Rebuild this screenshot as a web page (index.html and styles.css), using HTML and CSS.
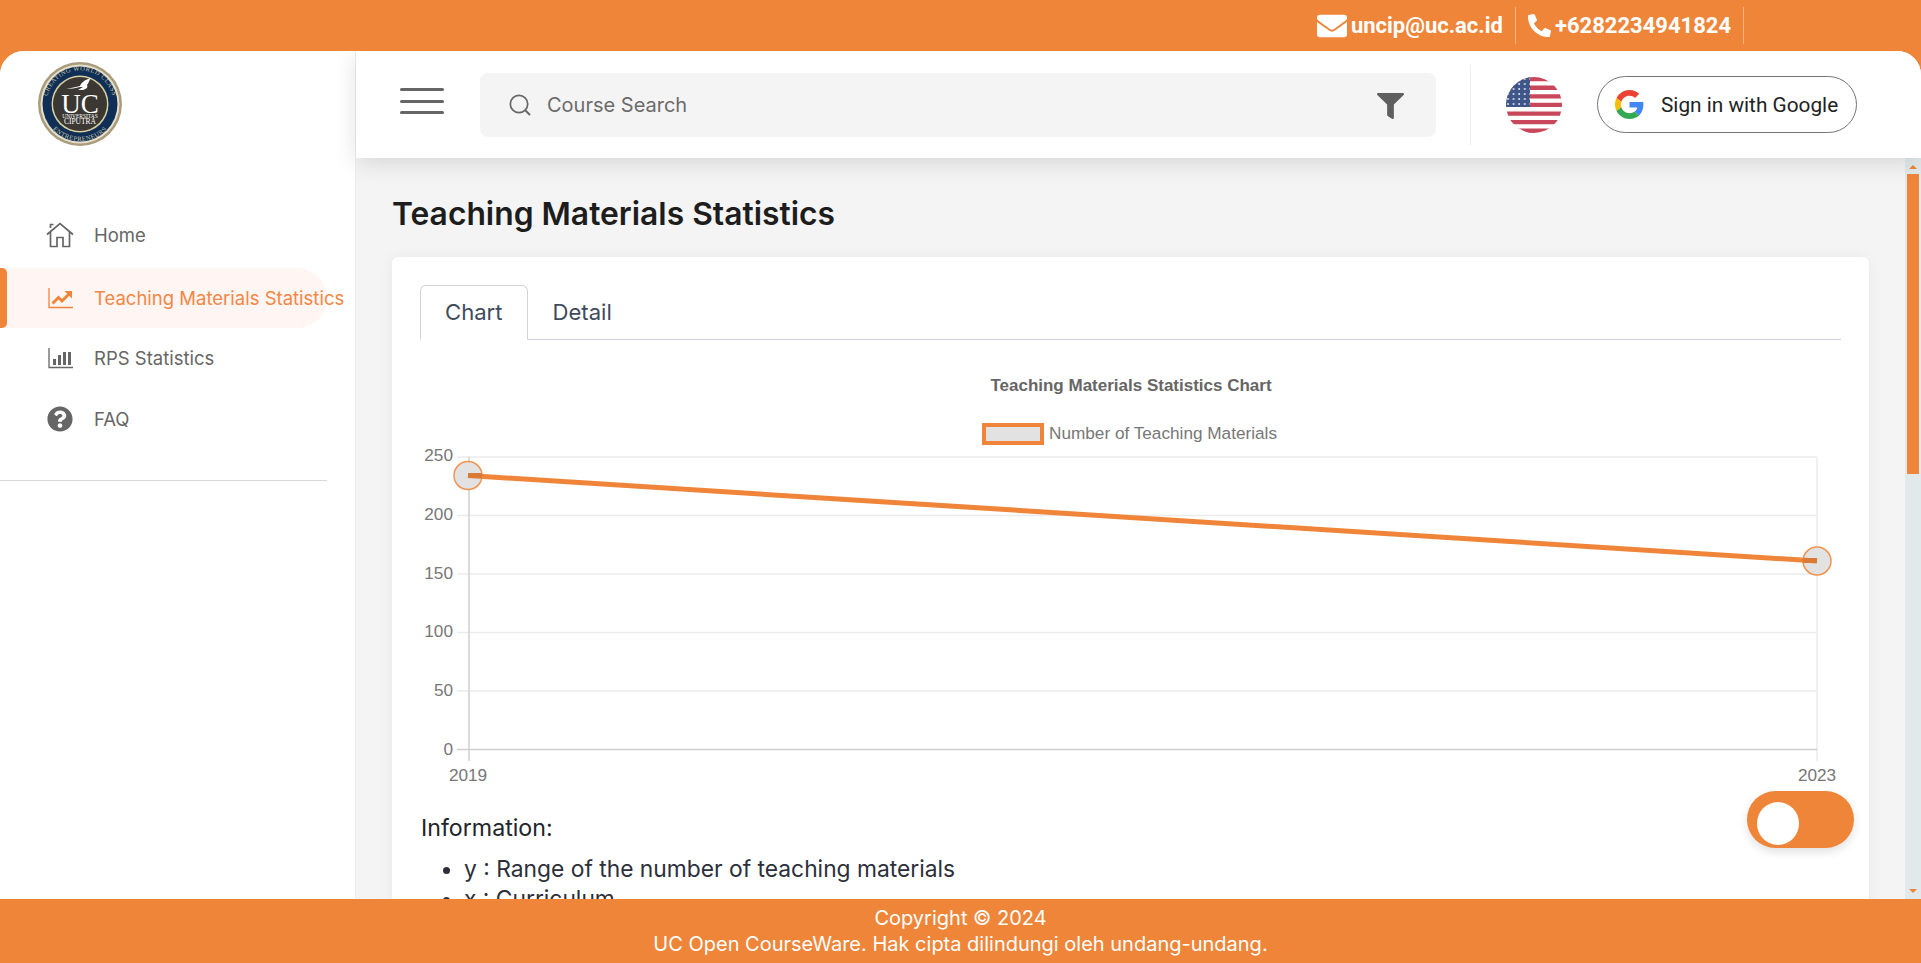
FILE: index.html
```html
<!DOCTYPE html>
<html lang="en">

<head>
    <meta charset="UTF-8">
    <meta name="viewport" content="width=device-width, initial-scale=1.0">
    <title>Teaching Materials Statistics</title>
    <link rel="stylesheet" href="styles.css">
</head>

<body>
    <div class="topbar">
        <div class="topbar-item">
            <svg class="icon-mail" viewBox="0 0 512 512"><path fill="#fff" d="M502.3 190.8c3.9-3.1 9.7-.2 9.7 4.7V400c0 26.5-21.5 48-48 48H48c-26.5 0-48-21.5-48-48V195.6c0-5 5.7-7.8 9.7-4.7 22.4 17.4 52.1 39.5 154.1 113.6 21.1 15.4 56.7 47.8 92.2 47.6 35.7.3 72-32.8 92.3-47.6 102-74.1 131.6-96.3 154-113.7zM256 320c23.2.4 56.6-29.2 73.4-41.4 132.7-96.3 142.8-104.7 173.4-128.7 5.8-4.5 9.2-11.5 9.2-18.9v-19c0-26.5-21.5-48-48-48H48C21.5 64 0 85.5 0 112v19c0 7.4 3.4 14.3 9.2 18.9 30.6 23.9 40.7 32.4 173.4 128.7 16.8 12.2 50.2 41.8 73.4 41.4z"/></svg>
            <span>uncip@uc.ac.id</span>
        </div>
        <div class="topbar-item">
            <svg class="icon-phone" viewBox="0 0 512 512"><path fill="#fff" d="M497.39 361.8l-112-48a24 24 0 0 0-28 6.9l-49.6 60.6A370.66 370.66 0 0 1 130.6 204.11l60.6-49.6a23.94 23.94 0 0 0 6.9-28l-48-112A24.16 24.16 0 0 0 122.6.61l-104 24A24 24 0 0 0 0 48c0 256.5 207.9 464 464 464a24 24 0 0 0 23.4-18.6l24-104a24.29 24.29 0 0 0-14.01-27.6z"/></svg>
            <span>+6282234941824</span>
        </div>
    </div>

    <div class="shell">
        <aside class="sidebar">
            <div class="logo">
                <svg width="84" height="84" viewBox="0 0 84 84">
                    <defs>
                        <path id="arc-top" d="M8.5 42a33.5 33.5 0 0 1 67 0"/>
                        <path id="arc-bottom" d="M5 42a37 37 0 0 0 74 0"/>
                    </defs>
                    <circle cx="42" cy="42" r="42" fill="#a99c7c"/>
                    <circle cx="42" cy="42" r="39.500" fill="#e6dfca"/>
                    <circle cx="42" cy="42" r="37.500" fill="#0f2f56"/>
                    <circle cx="42" cy="42" r="28.500" fill="#d9cf9f"/>
                    <circle cx="42" cy="42" r="27" fill="#3b3732"/>
                    <text class="logo-ring"><textPath href="#arc-top" startOffset="50%" text-anchor="middle">CREATING WORLD CLASS</textPath></text>
                    <text class="logo-ring"><textPath href="#arc-bottom" startOffset="50%" text-anchor="middle">ENTREPRENEURS</textPath></text>
                    <path fill="#fff" d="M28 27c5-1 10-2 14-3 1-3 4-6 11-8-2 2-2 5-4 7 1 2 0 4-4 5l-5 0 5-3-3 0c-4 1-10 2-14 2z"/>
                    <text class="logo-uc" x="42" y="50.500" text-anchor="middle">UC</text>
                    <text class="logo-small" x="42" y="55.500" text-anchor="middle">UNIVERSITAS</text>
                    <text class="logo-name" x="42" y="62" text-anchor="middle">CIPUTRA</text>
                </svg>
            </div>
            <nav class="nav">
                <a class="nav-item">
                    <svg class="nav-icon" viewBox="0 0 28 26"><path fill="none" stroke="#666" stroke-width="1.700" d="M1 12.500 14 1.500l13 11M4.500 10v14.500h6.500v-9h6v9h6.500V10M4.500 6V2.500h3"/></svg>
                    <span>Home</span>
                </a>
                <a class="nav-item active">
                    <svg class="nav-icon" viewBox="0 0 28 26"><path fill="none" stroke="#f0853a" stroke-width="1.300" d="M3 3v19.500h24"/><path fill="none" stroke="#f0853a" stroke-width="3" d="M6.500 18.500l6-6 3.500 3.500 7-7"/><path fill="#f0853a" d="M18.500 6H26v7.500z"/></svg>
                    <span>Teaching Materials Statistics</span>
                </a>
                <a class="nav-item">
                    <svg class="nav-icon" viewBox="0 0 28 26"><path fill="none" stroke="#666" stroke-width="1.300" d="M3 3v19.500h24"/><path fill="#666" d="M7 14h3v6H7zM12 10h3v10h-3zM17 7h3v13h-3zM22 7h3v13h-3z"/></svg>
                    <span>RPS Statistics</span>
                </a>
                <a class="nav-item">
                    <svg class="nav-icon" viewBox="0 0 512 512"><path fill="#666" d="M504 256c0 136.997-111.043 248-248 248S8 392.997 8 256C8 119.083 119.043 8 256 8s248 111.083 248 248zM262.655 90c-54.497 0-89.255 22.957-116.549 63.758-3.536 5.286-2.353 12.415 2.715 16.258l34.699 26.31c5.205 3.947 12.621 3.008 16.665-2.122 17.864-22.658 30.113-35.797 57.303-35.797 20.429 0 45.698 13.148 45.698 32.958 0 14.976-12.363 22.667-32.534 33.976C247.128 238.528 216 254.941 216 296v4c0 6.627 5.373 12 12 12h56c6.627 0 12-5.373 12-12v-1.333c0-28.462 83.186-29.647 83.186-106.667 0-58.002-60.165-102-116.531-102zM256 338c-25.365 0-46 20.635-46 46 0 25.364 20.635 46 46 46s46-20.636 46-46c0-25.365-20.635-46-46-46z"/></svg>
                    <span>FAQ</span>
                </a>
            </nav>
            <div class="sidebar-divider"></div>
        </aside>

        <div class="main">
            <header class="header">
                <button class="hamburger"><span></span><span></span><span></span></button>
                <div class="search">
                    <svg class="icon-search" viewBox="0 0 22 22"><circle cx="10" cy="10" r="8.700" fill="none" stroke="#666" stroke-width="1.700"/><path stroke="#666" stroke-width="1.900" d="M16.500 16.500 21 21"/></svg>
                    <span class="search-text">Course Search</span>
                    <svg class="icon-filter" viewBox="0 0 512 512" preserveAspectRatio="none"><path fill="#5f5f5f" d="M487.976 0H24.028C2.71 0-8.047 25.866 7.058 40.971L192 225.941V432c0 7.831 3.821 15.17 10.237 19.662l80 55.98C298.02 518.69 320 507.493 320 487.98V225.941l184.947-184.97C520.021 25.896 509.338 0 487.976 0z"/></svg>
                </div>
                <div class="header-sep"></div>
                <svg class="flag" viewBox="0 0 56 56">
                    <defs>
                        <clipPath id="flag-clip"><circle cx="28" cy="28" r="28"/></clipPath>
                        <pattern id="stars" width="5.600" height="5" patternUnits="userSpaceOnUse"><circle cx="2" cy="2" r="1" fill="#dfe3ee"/></pattern>
                    </defs>
                    <g clip-path="url(#flag-clip)">
                        <rect width="56" height="56" fill="#fff"/>
                        <path fill="#c9475a" d="M0 0h56v4.300H0zM0 8.600h56v4.300H0zM0 17.200h56v4.300H0zM0 25.800h56v4.300H0zM0 34.400h56v4.300H0zM0 43h56v4.300H0zM0 51.600h56V56H0z"/>
                        <rect width="24" height="30" fill="#3f5689"/>
                        <rect width="24" height="30" fill="url(#stars)"/>
                    </g>
                </svg>
                <button class="google-btn">
                    <svg class="icon-google" viewBox="0 0 48 48">
                        <path fill="#EA4335" d="M24 9.500c3.540 0 6.710 1.220 9.210 3.600l6.850-6.850C35.900 2.380 30.470 0 24 0 14.620 0 6.510 5.380 2.560 13.220l7.980 6.190C12.430 13.720 17.740 9.500 24 9.500z"/>
                        <path fill="#4285F4" d="M46.980 24.550c0-1.570-.15-3.090-.38-4.550H24v9.020h12.940c-.58 2.960-2.260 5.480-4.780 7.180l7.730 6c4.510-4.180 7.090-10.360 7.090-17.650z"/>
                        <path fill="#FBBC05" d="M10.530 28.590c-.48-1.450-.76-2.990-.76-4.590s.27-3.140.76-4.590l-7.980-6.190C.92 16.460 0 20.120 0 24c0 3.880.92 7.540 2.560 10.780l7.970-6.190z"/>
                        <path fill="#34A853" d="M24 48c6.480 0 11.930-2.130 15.890-5.810l-7.730-6c-2.150 1.450-4.920 2.300-8.160 2.300-6.260 0-11.570-4.220-13.470-9.910l-7.980 6.190C6.510 42.620 14.620 48 24 48z"/>
                    </svg>
                    <span>Sign in with Google</span>
                </button>
            </header>

            <div class="body-row">
                <section class="content">
                    <h1>Teaching Materials Statistics</h1>
                    <div class="card">
                        <div class="tabs">
                            <div class="tab active">Chart</div>
                            <div class="tab">Detail</div>
                        </div>
                        <svg class="chart" width="1421" height="450" viewBox="420 345 1421 450">
                            <text class="chart-title" x="1131" y="391" text-anchor="middle">Teaching Materials Statistics Chart</text>
                            <rect x="984" y="425" width="58" height="18" fill="#e2e2e2" stroke="#f0853a" stroke-width="4"/>
                            <text class="chart-label" x="1049" y="439">Number of Teaching Materials</text>

                            <g stroke="#ebebeb" stroke-width="1.500">
                                <path d="M457 457H1817M457 515.500H1817M457 574H1817M457 632.500H1817M457 691H1817"/>
                                <path d="M1817 457V761"/>
                            </g>
                            <path d="M469 457V761M457 749.500H1817" stroke="#cfcfcf" stroke-width="1.500" fill="none"/>

                            <g class="chart-label" text-anchor="end">
                                <text x="453" y="461">250</text>
                                <text x="453" y="520">200</text>
                                <text x="453" y="579">150</text>
                                <text x="453" y="637">100</text>
                                <text x="453" y="696">50</text>
                                <text x="453" y="755">0</text>
                            </g>
                            <g class="chart-label" text-anchor="middle">
                                <text x="468" y="781">2019</text>
                                <text x="1817" y="781">2023</text>
                            </g>

                            <circle cx="468" cy="475.500" r="14" fill="#e2e2e2" stroke="#f0934f" stroke-width="1.500"/>
                            <circle cx="1817" cy="561" r="14" fill="#e2e2e2" stroke="#f0934f" stroke-width="1.500"/>
                            <path d="M468 475.500 1817 561" stroke="#f0853a" stroke-width="5" fill="none"/>
                            <path d="M468 475.500h14M1803 560.500h14" stroke="#d97a35" stroke-width="5" fill="none"/>
                        </svg>
                        <p class="info-title">Information:</p>
                        <ul class="info-list">
                            <li>y : Range of the number of teaching materials</li>
                            <li>x : Curriculum</li>
                        </ul>
                    </div>
                </section>
                <div class="scrollbar">
                    <span class="arrow-up"></span>
                    <div class="scroll-thumb"></div>
                    <span class="arrow-down"></span>
                </div>
            </div>
        </div>
    </div>

    <footer class="footer">
        <p>Copyright © 2024</p>
        <p>UC Open CourseWare. Hak cipta dilindungi oleh undang-undang.</p>
    </footer>

    <button class="theme-toggle"><span></span></button>
</body>

</html>
```

FILE: styles.css
```css
* {
    box-sizing: border-box;
}

html,
body {
    height: 100%;
}

body {
    margin: 0;
    display: flex;
    flex-direction: column;
    overflow: hidden;
    background-color: #ef8539;
    font-family: 'Inter', sans-serif;
    color: #212529;
}

button {
    border: none;
    background: none;
    padding: 0;
    font: inherit;
}

/* top strip */
.topbar {
    height: 51px;
    flex: none;
    display: flex;
    justify-content: flex-end;
    align-items: center;
    padding-right: 177px;
    color: #fff;
    font-family: 'Roboto', sans-serif;
    font-weight: bold;
    font-size: 22px;
}

.topbar-item {
    display: flex;
    align-items: center;
    height: 37px;
    padding: 0 12px 0 0;
    margin-left: 12px;
    border-right: 1px solid #f5b27f;
    gap: 4px;
}

.icon-mail {
    width: 30px;
    height: 30px;
}

.icon-phone {
    width: 23px;
    height: 23px;
}

/* white panel */
.shell {
    flex: 1;
    min-height: 0;
    display: flex;
    background-color: #fff;
    border-radius: 24px 24px 0 0;
    overflow: hidden;
}

.sidebar {
    width: 356px;
    flex: none;
    border-right: 1px solid #eeeeee;
    background-color: #fff;
}

.logo {
    padding: 11px 0 0 38px;
    height: 154px;
}

.logo svg {
    display: block;
}

.logo-ring {
    font-family: 'Liberation Serif', serif;
    font-size: 6.500px;
    letter-spacing: 0.5px;
    fill: #c9c3a5;
}

.logo-uc {
    font-family: 'Liberation Serif', serif;
    font-size: 27px;
    fill: #fff;
}

.logo-small {
    font-family: 'Liberation Serif', serif;
    font-size: 5.500px;
    fill: #fff;
}

.logo-name {
    font-family: 'Liberation Serif', serif;
    font-size: 7.500px;
    fill: #fff;
}

.nav {
    display: flex;
    flex-direction: column;
    padding-right: 28px;
}

.nav-item {
    position: relative;
    display: flex;
    align-items: center;
    height: 60px;
    padding-left: 46px;
    gap: 20px;
    font-size: 18.500px;
    color: #666;
    white-space: nowrap;
}

.nav-item:nth-child(2) {
    margin-top: 3px;
}

.nav-item:nth-child(4) {
    margin-top: 1px;
}

.nav-icon {
    width: 28px;
    height: 26px;
    flex: none;
}

.nav-item.active {
    color: #f38744;
    background-color: #fff5f2;
    border-radius: 0 30px 30px 0;
}

.nav-item.active::before {
    content: "";
    position: absolute;
    left: 0;
    top: 0;
    bottom: 0;
    width: 7px;
    background-color: #ef8539;
    border-radius: 0 5px 5px 0;
}

.sidebar-divider {
    width: 327px;
    height: 1px;
    margin-top: 31px;
    background-color: #d8d8d8;
}

/* header */
.main {
    flex: 1;
    min-width: 0;
    display: flex;
    flex-direction: column;
    background-color: #f4f4f4;
}

.header {
    position: relative;
    z-index: 2;
    height: 107px;
    flex: none;
    display: flex;
    align-items: center;
    padding-left: 44px;
    background-color: #fff;
    box-shadow: 0 5px 22px rgba(0, 0, 0, 0.12);
}

.hamburger {
    width: 44px;
    flex: none;
    display: flex;
    flex-direction: column;
    gap: 8.500px;
    margin-top: -7px;
}

.hamburger span {
    display: block;
    height: 3px;
    background-color: #666;
    border-radius: 2px;
}

.search {
    width: 956px;
    height: 64px;
    flex: none;
    margin: 0 0 0 36px;
    display: flex;
    align-items: center;
    padding: 0 32px 0 29px;
    background-color: #f4f4f4;
    border-radius: 8px;
}

.icon-search {
    width: 22px;
    height: 22px;
    flex: none;
}

.search-text {
    flex: 1;
    margin-left: 16px;
    font-size: 20px;
    color: #6b6b6b;
}

.icon-filter {
    width: 27px;
    height: 26px;
    margin-top: 2px;
}

.header-sep {
    width: 1px;
    height: 80px;
    margin-left: 34px;
    background-color: #eeeeee;
}

.flag {
    width: 56px;
    height: 56px;
    margin-left: 35px;
}

.google-btn {
    width: 260px;
    height: 57px;
    margin-left: 35px;
    display: flex;
    align-items: center;
    gap: 17px;
    padding-left: 17px;
    border: 1px solid #757575;
    border-radius: 29px;
    background-color: #fff;
    color: #222;
    font-family: 'Roboto', sans-serif;
    font-size: 20.800px;
}

.icon-google {
    width: 29px;
    height: 29px;
}

/* content */
.body-row {
    flex: 1;
    min-height: 0;
    display: flex;
}

.content {
    flex: 1;
    min-width: 0;
    overflow: hidden;
    padding: 36px 36px 0 36px;
}

h1 {
    margin: 0 0 24px;
    font-size: 31.800px;
    line-height: 39px;
    font-weight: 600;
    color: #1d1d1d;
}

.card {
    padding: 28px;
    background-color: #fff;
    border-radius: 6px;
    box-shadow: 0 0 14px rgba(0, 0, 0, 0.05);
}

.tabs {
    display: flex;
    height: 55px;
    border-bottom: 1px solid #d0d3da;
}

.tab {
    height: 55px;
    padding: 13px 24px 0;
    font-size: 22.100px;
    color: #3f4a5c;
    border: 1px solid transparent;
}

.tab.active {
    background-color: #fff;
    border-color: #d0d3da #d0d3da #fff;
    border-radius: 6px 6px 0 0;
}

.chart {
    display: block;
    margin-top: 5px;
}

.chart-title {
    font-family: 'Liberation Sans', sans-serif;
    font-size: 17px;
    font-weight: bold;
    fill: #666;
}

.chart-label,
.chart-label text {
    font-family: 'Liberation Sans', sans-serif;
    font-size: 17.200px;
    fill: #777;
}

.info-title {
    margin: 18px 0 0 1px;
    font-size: 23.200px;
    line-height: 30px;
}

.info-list {
    margin: 11px 0 0;
    padding-left: 44px;
    font-size: 22.800px;
    line-height: 30px;
    color: #2c2f3a;
}

/* scrollbar */
.scrollbar {
    width: 16px;
    flex: none;
    display: flex;
    flex-direction: column;
    align-items: center;
    background-color: #e1e9ea;
}

.arrow-up,
.arrow-down {
    width: 0;
    height: 0;
    border-left: 4px solid transparent;
    border-right: 4px solid transparent;
}

.arrow-up {
    margin-top: 7px;
    border-bottom: 4px solid #ef8539;
}

.arrow-down {
    margin-top: auto;
    margin-bottom: 6px;
    border-top: 4px solid #ef8539;
}

.scroll-thumb {
    width: 12px;
    height: 300px;
    margin-top: 5px;
    background-color: #ef8539;
}

/* footer */
.footer {
    height: 64px;
    flex: none;
    position: relative;
    z-index: 3;
    padding-top: 6px;
    text-align: center;
    color: #fff;
    font-size: 20px;
    line-height: 26px;
    background-color: #ef8539;
}

.footer p {
    margin: 0;
}

/* floating switch */
.theme-toggle {
    position: fixed;
    left: 1747px;
    top: 791px;
    z-index: 4;
    width: 107px;
    height: 57px;
    padding: 7px 0 0 10px;
    border-radius: 29px;
    background-color: #ef8539;
    box-shadow: 0 4px 10px rgba(0, 0, 0, 0.12);
}

.theme-toggle span {
    display: block;
    width: 42px;
    height: 43px;
    border-radius: 50%;
    background-color: #fff;
}
```
